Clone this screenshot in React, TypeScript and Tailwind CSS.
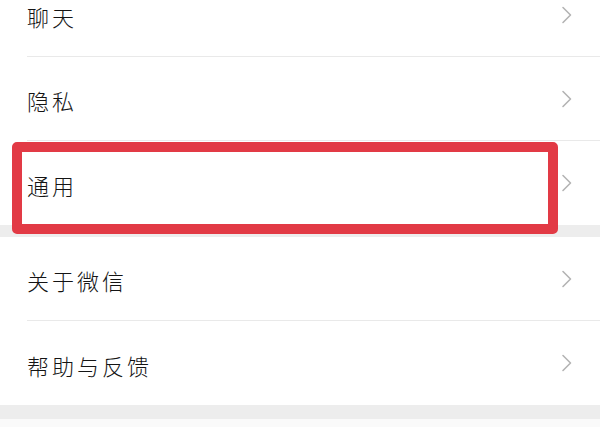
const groups = [
  ['聊天', '隐私', '通用'],
  ['关于微信', '帮助与反馈'],
]

function Chevron() {
  return (
    <svg width="12" height="18" viewBox="0 0 12 18" fill="none" className="shrink-0">
      <path d="M2 1.5l7.5 7.5L2 16.5" stroke="#b4b4b4" strokeWidth="1.6" strokeLinecap="round" strokeLinejoin="round" />
    </svg>
  )
}

function Row({ label, last, first, marked }: { label: string; last: boolean; first?: boolean; marked?: boolean }) {
  return (
    <div className={`relative pl-[27px] bg-white ${first ? '-mt-[27px]' : ''}`}>
      <div className={`h-[84px] flex items-center pr-[27px] ${last ? '' : 'border-b border-[#e9e9e9]'}`}>
        <span className="flex-1 pt-[3px] text-[22px] font-light tracking-[3px] text-[#141414] leading-none">{label}</span>
        <Chevron />
      </div>
      {/* Red highlight frame */}
      {marked && (
        <div className="absolute left-[12px] top-[1px] w-[546px] h-[92px] border-[10px] border-[#e23a45] rounded-[5px]" />
      )}
    </div>
  )
}

export default function App() {
  return (
    <div
      className="w-[600px] h-[427px] overflow-hidden bg-[#fafafa]"
      style={{ fontFamily: '"Noto Sans CJK SC", "Noto Sans", sans-serif' }}
    >
      {groups.map((items, gi) => (
        <div key={gi}>
          {items.map((label, i) => (
            <Row
              key={label}
              label={label}
              first={gi === 0 && i === 0}
              last={i === items.length - 1}
              marked={label === '通用'}
            />
          ))}
          <div className={gi === 0 ? 'h-[12px] bg-[#ededed]' : 'h-[14px] bg-[#ededed]'} />
        </div>
      ))}
    </div>
  )
}
